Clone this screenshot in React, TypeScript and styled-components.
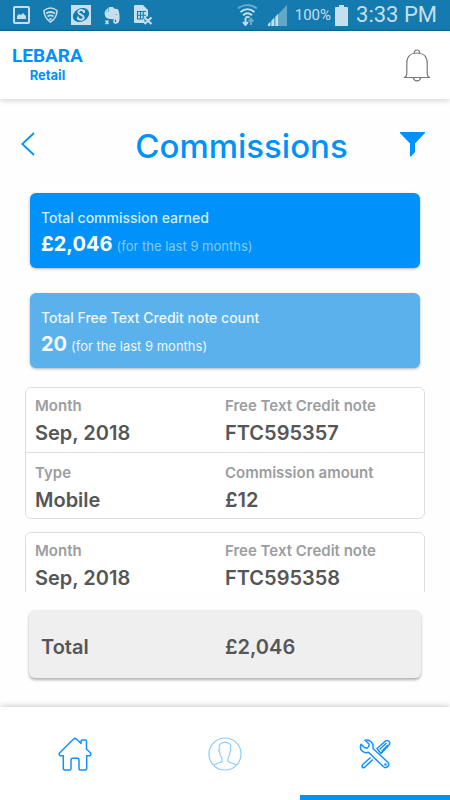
import React from "react";
import styled, { createGlobalStyle } from "styled-components";

const BLUE = "#0092f8";

const GlobalStyle = createGlobalStyle`
  *, *::before, *::after { box-sizing: border-box; }
  body { margin: 0; background: #fff; font-family: Inter, "Liberation Sans", sans-serif; }
  button { border: 0; padding: 0; background: none; color: inherit; font: inherit; cursor: pointer; }
  svg { display: block; }
`;

const Screen = styled.div`
  display: flex;
  flex-direction: column;
  height: 100vh;
  background: #fefefe;
`;

const StatusBar = styled.div`
  display: flex;
  align-items: center;
  justify-content: space-between;
  flex: none;
  height: 31px;
  padding: 0 13px;
  background: #157bae;
  border-bottom: 1px solid #0a6aa1;
  color: #c5dfec;
  font-family: Roboto, sans-serif;
`;

const StatusGroup = styled.div<{ $gap: number }>`
  display: flex;
  align-items: center;
  gap: ${(p) => p.$gap}px;
`;

const Percent = styled.span`
  margin: 0 4px 0 8px;
  font-size: 15px;
  line-height: 20px;
`;

const Clock = styled.time`
  margin-left: 8px;
  font-size: 22px;
  line-height: 30px;
`;

const Header = styled.header`
  display: flex;
  align-items: center;
  justify-content: space-between;
  flex: none;
  height: 68px;
  padding: 0 19px 0 12px;
  background: #fff;
  box-shadow: 0 1px 6px rgba(0, 0, 0, 0.2);
`;

const Brand = styled.a`
  display: flex;
  flex-direction: column;
  align-items: center;
  color: #0090ff;
  text-decoration: none;
`;

const BrandName = styled.span`
  font: 700 19px/20px Roboto, sans-serif;
`;

const BrandSub = styled.span`
  font-size: 13px;
  font-weight: 700;
  line-height: 18px;
`;

const Main = styled.main`
  display: flex;
  flex-direction: column;
  flex: 1;
  min-height: 0;
  padding: 20px 25px 0;
`;

const TitleRow = styled.div`
  display: flex;
  align-items: center;
  margin: 0 0 24px -5px;
  height: 50px;
  flex: none;
  color: ${BLUE};
`;

const Title = styled.h1`
  flex: 1;
  margin: 0;
  padding: 4px 0 0 48px;
  font-size: 33px;
  font-weight: 500;
  line-height: 46px;
  text-align: center;
`;

const Summary = styled.section<{ $soft?: boolean }>`
  flex: none;
  margin: 0 5px ${(p) => (p.$soft ? 19 : 25)}px;
  padding: 14px 11px 9px;
  border-radius: 6px;
  background: ${(p) => (p.$soft ? "#5ab1ec" : BLUE)};
  box-shadow: 0 1px 3px rgba(0, 0, 0, 0.3);
  color: ${(p) => (p.$soft ? "#eef7fd" : "#d3ecfe")};
`;

const SummaryLabel = styled.div`
  font-size: 14px;
  font-weight: 500;
  line-height: 22px;
`;

const SummaryFigure = styled.div`
  font-size: 20px;
  line-height: 30px;
`;

const Amount = styled.strong<{ $soft?: boolean }>`
  margin-right: 4px;
  color: ${(p) => (p.$soft ? "#f4faff" : "#fff")};
`;

const Period = styled.span<{ $soft?: boolean }>`
  color: ${(p) => (p.$soft ? "#eef7fd" : "#86c9fb")};
  font-size: 13px;
  line-height: 16px;
`;

const NoteList = styled.div`
  display: flex;
  flex-direction: column;
  gap: 13px;
  flex: 1;
  min-height: 0;
  overflow-y: auto;
  scrollbar-width: none;
`;

const Note = styled.article`
  flex: none;
  border: 1px solid #dedede;
  border-radius: 6px;
  background: #fff;
`;

const NoteRow = styled.dl`
  display: grid;
  grid-template-columns: 1fr 1fr;
  margin: 0;
  padding: 8px 9px 2px;

  & + & {
    padding: 10px 9px 1px;
    border-top: 1px solid #dedede;
  }
`;

const FieldName = styled.dt`
  color: #9b9d9f;
  font-size: 15px;
  font-weight: 600;
  line-height: 20px;
`;

const FieldValue = styled.dd`
  margin: 0;
  color: #555657;
  font-size: 20px;
  font-weight: 600;
  line-height: 34px;
`;

const TotalBar = styled.section`
  display: grid;
  grid-template-columns: 1fr 1fr;
  flex: none;
  margin: 18px 4px 29px;
  padding: 22px 12px 16px;
  border-radius: 6px;
  background: #efefef;
  box-shadow: 0 2px 3px rgba(0, 0, 0, 0.3);
  color: #555657;
  font-size: 20px;
  font-weight: 600;
  line-height: 30px;
`;

const TabBar = styled.nav`
  display: grid;
  grid-template-columns: repeat(3, 1fr);
  flex: none;
  height: 93px;
  background: #fff;
  box-shadow: 0 -1px 6px rgba(0, 0, 0, 0.2);
`;

const Tab = styled.button<{ $active?: boolean }>`
  display: grid;
  place-items: center;
  padding-top: 5px;
  border-bottom: 5px solid ${(p) => (p.$active ? BLUE : "transparent")};
`;

const PictureIcon = () => (
  <svg width="17" height="18" viewBox="0 0 17 18">
    <rect x="1" y="1" width="15" height="16" rx="1" fill="none" stroke="currentColor" strokeWidth="2" />
    <path d="M4 13V10l2-2 2 1 2-2 3 3v3z" fill="currentColor" />
  </svg>
);

const ShieldIcon = () => (
  <svg width="15" height="16" viewBox="0 0 15 16" fill="none" stroke="currentColor">
    <path d="M1 3.500C5 .5 10 .5 14 3.500 14 9 11.500 12.500 7.500 15 3.500 12.500 1 9 1 3.500z" strokeWidth="1.500" />
    <path d="M3 6.500c3-2 6-2 9 0M4.500 9.500c2-1.500 4-1.500 6 0M6.500 12h2" strokeWidth="1.800" />
  </svg>
);

const CoinIcon = () => (
  <svg width="20" height="20" viewBox="0 0 20 20">
    <path fill="currentColor" d="M0 0h20v20H0z" />
    <ellipse cx="10" cy="10" rx="8.500" ry="6.500" transform="rotate(-28 10 10)" fill="#157bae" />
    <path d="M13 6.500C11 4 7 5 7.500 7.700 8 10 12.500 9.500 12.700 12.200 12.800 15 8.500 15.700 6.700 13.200M7 11.800v3M13 5v3" fill="none" stroke="currentColor" strokeWidth="2" />
  </svg>
);

const ElephantIcon = () => (
  <svg width="17" height="19" viewBox="0 0 17 19">
    <path d="M5 1h4l1 1.500 4 .7c1.500 3 2 8 1.300 11.500C14.800 17.500 12 18.500 10 17.200c-1.500-1-1-3.700 1-3.700v1.500c-.8.500 0 1.500.8 1 .8-.7.500-2-.8-2.500-2-.5-2.500 0-4-.5-3 0-5.700-1-6-3.500C.7 8 .3 6.500 1 5.300h4z" fill="currentColor" />
    <path d="M1 5L4.500 1.500V5z" fill="currentColor" />
    <path d="M11.500 8.500c1-.5 1.700 0 2 .8z" fill="#157bae" />
    <path d="M1.500 14.500l3 3.500m0-3.500l-3 3.500" stroke="currentColor" strokeWidth="1.500" />
  </svg>
);

const SimIcon = () => (
  <svg width="19" height="20" viewBox="0 0 19 20">
    <path d="M1 0h8l5 5v6l-4 2 1 5H1q-1 0-1-1V1q0-1 1-1z" fill="currentColor" />
    <path d="M3 6.500h9M3 10.200h9M3 14h6M3.500 6v8M6.500 6v8M9.200 6v8" stroke="#157bae" strokeWidth="1.100" />
    <path d="M10.500 12.500l7 6.500m0-6.500l-7 6.500" stroke="currentColor" strokeWidth="2" />
  </svg>
);

const WifiIcon = () => (
  <svg width="21" height="22" viewBox="0 0 21 22" fill="none" stroke="currentColor" strokeWidth="1.900">
    <path d="M1 4.500C6.500 0 14.500 0 20 4.500" opacity=".5" />
    <path d="M3.500 8c4.500-3.700 9.500-3.700 14 0M6 11.200c3-2.500 6-2.500 9 0M8.500 13.500c1.500-.8 2.500-.8 4 0" />
    <path d="M8.500 14v6M6 18l2.500 3L11 18" />
    <path d="M14 21v-6M11.700 17.500L14 14.700l2.300 2.800" opacity=".5" />
  </svg>
);

const SignalIcon = () => (
  <svg width="20" height="21" viewBox="0 0 20 21" fill="currentColor">
    <path d="M0 21L20 0v21z" opacity=".45" />
    <path d="M1 21v-2l2-2v4zM4.500 21v-5.500l2.500-2.500v8zM8.500 21v-9.500L11 9v12z" />
  </svg>
);

const BatteryIcon = () => (
  <svg width="13" height="21" viewBox="0 0 13 21" fill="currentColor">
    <path d="M4 0h5v2h3q1 0 1 1v18H0V3q0-1 1-1h3z" />
  </svg>
);

const BellIcon = () => (
  <svg width="28" height="33" viewBox="0 0 28 33" fill="none" stroke="#777" strokeWidth="1.200">
    <path d="M11.300 4.500C10.500-.2 17.500-.2 16.700 4.500" />
    <path d="M1 28.500c2-.5 2.800-1.800 2.800-4.500V14C3.800 7.500 8 4 14 4s10.200 3.500 10.200 10v10c0 2.700.8 4 2.800 4.500z" />
    <path d="M10.300 28.800c1 4 6.400 4 7.400 0" />
  </svg>
);

const BackIcon = () => (
  <svg width="15" height="24" viewBox="0 0 15 24" fill="none" stroke="currentColor" strokeWidth="1.800">
    <path d="M14 1L2.300 12 14 23" />
  </svg>
);

const FilterIcon = () => (
  <svg width="25" height="25" viewBox="0 0 25 25" fill="currentColor">
    <path d="M0 0h25v1L15 11.500V20l-4 4.500h-1v-13L0 1z" />
  </svg>
);

const HomeIcon = () => (
  <svg width="34" height="34" viewBox="0 0 34 34" fill="none" stroke="#1391fb" strokeWidth="1.500" strokeLinejoin="round">
    <path d="M1.500 16L15.700 2Q17 .8 18.300 2L23 6.500V4.300Q23 3 24.300 3H27.200Q28.500 3 28.500 4.300V12L32.500 16Q33.500 17.700 32 18.700H28.700V31Q28.700 33 27 33H22.300Q21 33 21 31.500V23Q21 21.300 19.500 21.300H14.500Q13 21.300 13 23V31.500Q13 33 11.700 33H7Q5.300 33 5.300 31V18.700H2Q.5 17.700 1.500 16z" />
  </svg>
);

const ProfileIcon = () => (
  <svg width="34" height="34" viewBox="0 0 34 34" fill="none" stroke="#8dcbfa" strokeWidth="1.200">
    <circle cx="17" cy="17" r="16" />
    <path d="M5.500 28l8.500-3.500V21c-1.500-1.500-2.500-4-2.500-6-1-1-.5-2.500 0-3-1-4 .5-5.500 2-5.500 2-1.500 5-1.500 6.500-.5 3 .5 3 3 2.300 6 .8.700.5 2-.3 3 0 2-.8 4.500-2 6v3.500l8.500 3.500" />
  </svg>
);

const ToolsIcon = () => (
  <svg width="32" height="30" viewBox="0 0 32 30" fill="none" stroke="#1391fb" strokeWidth="1.500" strokeLinejoin="round">
    <path d="M6 1.200L10 5Q10.500 8 8.200 9.200L5.300 8.600 2 5.200C-.2 11.200 4.500 14.800 9.500 13.200L24.500 27.800Q26.500 29.500 28.700 27.700 30.700 25.500 28.800 23.300L14 9.500C15 3.500 10.500.2 6 1.200z" />
    <path d="M18 9.500L26.500 2Q29 .8 30.300 2.700 31.200 4.500 30 6L22 14.500zM20.500 10.500L27.500 4M22.500 12.500L29 6" />
    <path d="M11.500 18.500L3.800 25.500Q2.500 27.500 3.500 28.500 5 29 6 28L13.800 20.500" />
    <circle cx="26.500" cy="25.500" r=".6" />
  </svg>
);

type Field = [name: string, value: string];

const notes: Field[][][] = [
  [
    [["Month", "Sep, 2018"], ["Free Text Credit note", "FTC595357"]],
    [["Type", "Mobile"], ["Commission amount", "£12"]],
  ],
  [[["Month", "Sep, 2018"], ["Free Text Credit note", "FTC595358"]]],
];

export default function App() {
  return (
    <Screen>
      <GlobalStyle />
      <StatusBar>
        <StatusGroup $gap={13}>
          <PictureIcon />
          <ShieldIcon />
          <CoinIcon />
          <ElephantIcon />
          <SimIcon />
        </StatusGroup>
        <StatusGroup $gap={0}>
          <StatusGroup $gap={9}>
            <WifiIcon />
            <SignalIcon />
          </StatusGroup>
          <Percent>100%</Percent>
          <BatteryIcon />
          <Clock>3:33 PM</Clock>
        </StatusGroup>
      </StatusBar>
      <Header>
        <Brand href="#">
          <BrandName>LEBARA</BrandName>
          <BrandSub>Retail</BrandSub>
        </Brand>
        <button aria-label="Notifications"><BellIcon /></button>
      </Header>
      <Main>
        <TitleRow>
          <button aria-label="Back"><BackIcon /></button>
          <Title>Commissions</Title>
          <button aria-label="Filter"><FilterIcon /></button>
        </TitleRow>
        <Summary>
          <SummaryLabel>Total commission earned</SummaryLabel>
          <SummaryFigure>
            <Amount>£2,046</Amount>
            <Period>(for the last 9 months)</Period>
          </SummaryFigure>
        </Summary>
        <Summary $soft>
          <SummaryLabel>Total Free Text Credit note count</SummaryLabel>
          <SummaryFigure>
            <Amount $soft>20</Amount>
            <Period $soft>(for the last 9 months)</Period>
          </SummaryFigure>
        </Summary>
        <NoteList>
          {notes.map((rows, i) => (
            <Note key={i}>
              {rows.map((fields, j) => (
                <NoteRow key={j}>
                  {fields.map(([name, value]) => (
                    <div key={name}>
                      <FieldName>{name}</FieldName>
                      <FieldValue>{value}</FieldValue>
                    </div>
                  ))}
                </NoteRow>
              ))}
            </Note>
          ))}
        </NoteList>
        <TotalBar>
          <span>Total</span>
          <span>£2,046</span>
        </TotalBar>
      </Main>
      <TabBar>
        <Tab aria-label="Home"><HomeIcon /></Tab>
        <Tab aria-label="Profile"><ProfileIcon /></Tab>
        <Tab aria-label="Tools" $active><ToolsIcon /></Tab>
      </TabBar>
    </Screen>
  );
}
